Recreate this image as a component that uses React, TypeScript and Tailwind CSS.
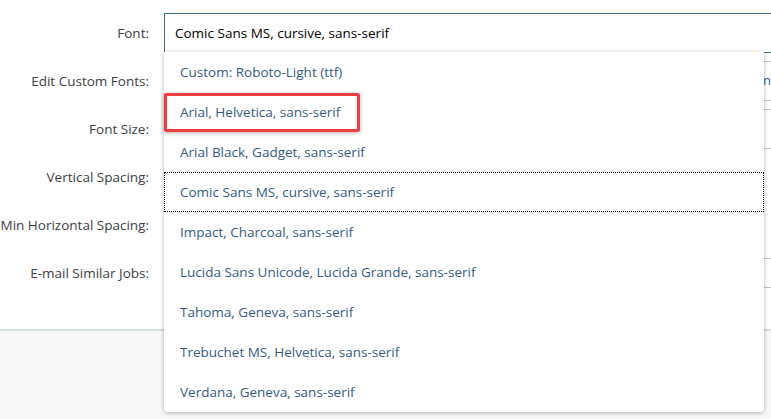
import React from 'react';

const fontOptions = [
  'Custom: Roboto-Light (ttf)',
  'Arial, Helvetica, sans-serif',
  'Arial Black, Gadget, sans-serif',
  'Comic Sans MS, cursive, sans-serif',
  'Impact, Charcoal, sans-serif',
  'Lucida Sans Unicode, Lucida Grande, sans-serif',
  'Tahoma, Geneva, sans-serif',
  'Trebuchet MS, Helvetica, sans-serif',
  'Verdana, Geneva, sans-serif',
];

const labels = [
  'Font:',
  'Edit Custom Fonts:',
  'Font Size:',
  'Vertical Spacing:',
  'Min Horizontal Spacing:',
  'E-mail Similar Jobs:',
];

const App: React.FC = () => {
  const selected = 'Comic Sans MS, cursive, sans-serif';

  return (
    <div className="relative w-[771px] h-[419px] overflow-hidden bg-[#f7f7f7] font-['Open_Sans',sans-serif]">
      {/* Settings form */}
      <div className="h-[331px] bg-white border-b-2 border-[#d3e0ec] pt-[9px]">
        {labels.map((label, i) => (
          <div key={label} className="flex items-center h-12">
            <div className="w-[149px] shrink-0 text-right text-[13.5px] text-[#3b3e42]">{label}</div>
            <div className="ml-[15px] flex-1 h-full flex items-center">
              {i === 0 && (
                <div className="w-[640px] h-10 border border-[#3f6e99] flex items-center pl-[10px] text-[13.5px] text-black">
                  {selected}
                </div>
              )}
              {i === 1 && (
                <div className="w-full h-10 flex items-center justify-end border-y border-[#c4c4c4] text-[13px] text-[#2a5d94] -mr-2">
                  Edit Fon
                </div>
              )}
              {i === 2 && <div className="w-full h-10 border-y border-[#c4c4c4]" />}
              {i === 5 && <div className="w-full h-[30px] border-y border-[#c4c4c4]" />}
            </div>
          </div>
        ))}
      </div>

      {/* Dropdown list */}
      <div className="absolute left-[164px] top-[52px] w-[600px] h-[360px] bg-white rounded-b-[4px] shadow-[0_1px_4px_rgba(0,0,0,0.3)]">
        {fontOptions.map(opt => (
          <div
            key={opt}
            className={`h-10 flex items-center pl-4 text-[13.5px] text-[#355b82] ${
              opt === selected ? 'outline-1 outline-dotted outline-black -outline-offset-1' : ''
            }`}
          >
            {opt}
          </div>
        ))}
        {/* highlight annotation */}
        <div className="absolute left-0 top-[41px] w-[196px] h-[39px] border-[3px] border-[#ef3f41] rounded-[2px] shadow-[0_1px_4px_rgba(0,0,0,0.3)]" />
      </div>
    </div>
  );
};

export default App;
